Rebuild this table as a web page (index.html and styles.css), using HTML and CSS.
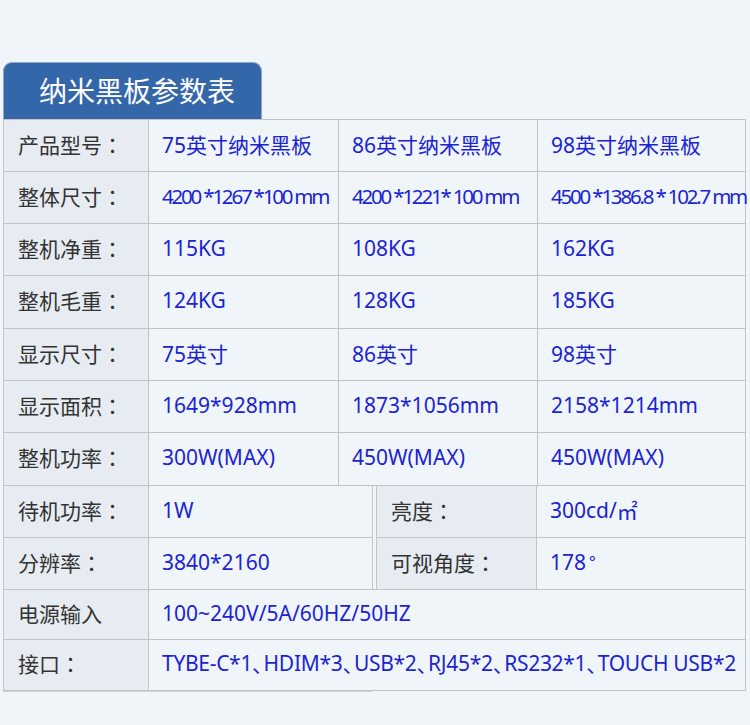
FILE: index.html
```html
<!DOCTYPE html>
<html lang="zh-CN">
<head>
<meta charset="utf-8">
<title>纳米黑板参数表</title>
<link rel="stylesheet" href="styles.css">
</head>
<body>
<div class="page">
  <div class="tab">纳米黑板参数表</div>
  <div class="grid sec1">
    <div class="cell label">产品型号<span class="c">：</span></div>
    <div class="cell val">75英寸纳米黑板</div>
    <div class="cell val">86英寸纳米黑板</div>
    <div class="cell val">98英寸纳米黑板</div>

    <div class="cell label">整体尺寸<span class="c">：</span></div>
    <div class="cell val dim">4200 *1267 *100 mm</div>
    <div class="cell val dim">4200 *1221* 100 mm</div>
    <div class="cell val dim">4500 *1386.8 * 102.7 mm</div>

    <div class="cell label">整机净重<span class="c">：</span></div>
    <div class="cell val">115KG</div>
    <div class="cell val">108KG</div>
    <div class="cell val">162KG</div>

    <div class="cell label">整机毛重<span class="c">：</span></div>
    <div class="cell val">124KG</div>
    <div class="cell val">128KG</div>
    <div class="cell val">185KG</div>

    <div class="cell label">显示尺寸<span class="c">：</span></div>
    <div class="cell val">75英寸</div>
    <div class="cell val">86英寸</div>
    <div class="cell val">98英寸</div>

    <div class="cell label">显示面积<span class="c">：</span></div>
    <div class="cell val">1649*928mm</div>
    <div class="cell val">1873*1056mm</div>
    <div class="cell val">2158*1214mm</div>

    <div class="cell label">整机功率<span class="c">：</span></div>
    <div class="cell val">300W(MAX)</div>
    <div class="cell val">450W(MAX)</div>
    <div class="cell val">450W(MAX)</div>
  </div>

  <div class="grid sec2">
    <div class="cell label">待机功率<span class="c">：</span></div>
    <div class="cell val">1W</div>
    <div class="gap"></div>
    <div class="cell label lb">亮度<span class="c">：</span></div>
    <div class="cell val">300cd/<span class="c">㎡</span></div>

    <div class="cell label">分辨率<span class="c">：</span></div>
    <div class="cell val">3840*2160</div>
    <div class="cell label lb">可视角度<span class="c">：</span></div>
    <div class="cell val">178<span class="deg">°</span></div>
  </div>

  <div class="grid sec3">
    <div class="cell label">电源输入</div>
    <div class="cell val">100~240V/5A/60HZ/50HZ</div>
    <div class="cell label">接口<span class="c">：</span></div>
    <div class="cell val ports">TYBE-C*1<span class="p">、</span>HDIM*3<span class="p">、</span>USB*2<span class="p">、</span>RJ45*2<span class="p">、</span>RS232*1<span class="p">、</span>TOUCH USB*2</div>
  </div>
  <div class="shadow"></div>
</div>
</body>
</html>
```

FILE: styles.css
```css
html, body {
  margin: 0;
  padding: 0;
  background: #f0f5f9;
}

.page {
  padding: 62px 0 0 3px;
  font-family: "Noto Sans", "Noto Sans CJK SC", sans-serif;
}

.tab {
  box-sizing: border-box;
  width: 259px;
  height: 57px;
  background: #3467a9;
  border: 1px solid #8fa6c4;
  border-bottom: none;
  border-radius: 9px 9px 0 0;
  color: #ffffff;
  font-family: "Noto Sans CJK SC", sans-serif;
  font-size: 28px;
  line-height: 54px;
  padding-left: 35px;
  white-space: nowrap;
}

.grid {
  display: grid;
  width: 743px;
  box-sizing: border-box;
  border-left: 1px solid #c3c3c3;
}

.sec1 {
  border-top: 1px solid #c3c3c3;
  grid-template-columns: 145px 190px 199px 208px;
  grid-template-rows: 52px 52px 52px 53px 52px 52px 53px;
}

.sec2 {
  grid-template-columns: 145px 224px 3px 161px 209px;
  grid-template-rows: 52px 52px;
}

.sec3 {
  grid-template-columns: 145px 597px;
  grid-template-rows: 50px 51px;
}

.cell {
  box-sizing: border-box;
  border-right: 1px solid #c3c3c3;
  border-bottom: 1px solid #c3c3c3;
  display: flex;
  align-items: center;
  font-size: 21px;
  white-space: nowrap;
  padding-left: 13px;
  padding-bottom: 4px;
}

.label {
  background: #e6ecf1;
  color: #333333;
  padding-left: 14px;
}

.lb {
  border-left: 1px solid #c3c3c3;
  padding-left: 14px;
}

.val {
  background: #eff5f9;
  color: #1c24d2;
}

.c {
  font-family: "Noto Sans CJK JP", sans-serif;
}

.deg {
  font-family: "Noto Sans CJK JP", sans-serif;
  font-size: 18px;
  margin-left: 3px;
  align-self: flex-start;
  margin-top: 11px;
}

.ports {
  letter-spacing: -0.3px;
}

.p {
  font-family: "Noto Sans CJK JP", sans-serif;
  font-feature-settings: "halt";
  letter-spacing: 1px;
}

.dim {
  font-size: 20.5px;
  letter-spacing: -2.2px;
}

.gap {
  grid-row: 1 / span 2;
  grid-column: 3;
  background: #eff5f9;
  border-bottom: 1px solid #c3c3c3;
}

.shadow {
  width: 369px;
  height: 1px;
  background: #d0d3d6;
}
```
